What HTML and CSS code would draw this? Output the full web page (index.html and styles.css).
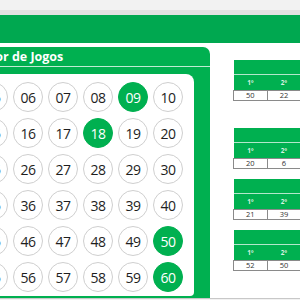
FILE: index.html
```
<!DOCTYPE html>
<html lang="pt">

<head>
    <meta charset="UTF-8">
    <title>Gerador de Jogos</title>
    <link rel="stylesheet" href="styles.css">
</head>

<body>
    <div class="topo"></div>
    <header class="barra"></header>

    <main class="conteudo">
        <section class="painel">
            <h2 class="titulo">Gerador de Jogos</h2>
            <div class="quadro">
                <div class="numeros">
                    <span class="bola">01</span><span class="bola">02</span><span class="bola">03</span><span class="bola">04</span><span class="bola">05</span>
                    <span class="bola">06</span><span class="bola">07</span><span class="bola">08</span><span class="bola sorteada">09</span><span class="bola">10</span>
                    <span class="bola">11</span><span class="bola">12</span><span class="bola">13</span><span class="bola">14</span><span class="bola">15</span>
                    <span class="bola">16</span><span class="bola">17</span><span class="bola sorteada">18</span><span class="bola">19</span><span class="bola">20</span>
                    <span class="bola">21</span><span class="bola">22</span><span class="bola">23</span><span class="bola">24</span><span class="bola">25</span>
                    <span class="bola">26</span><span class="bola">27</span><span class="bola">28</span><span class="bola">29</span><span class="bola">30</span>
                    <span class="bola">31</span><span class="bola">32</span><span class="bola">33</span><span class="bola">34</span><span class="bola">35</span>
                    <span class="bola">36</span><span class="bola">37</span><span class="bola">38</span><span class="bola">39</span><span class="bola">40</span>
                    <span class="bola">41</span><span class="bola">42</span><span class="bola">43</span><span class="bola">44</span><span class="bola">45</span>
                    <span class="bola">46</span><span class="bola">47</span><span class="bola">48</span><span class="bola">49</span><span class="bola sorteada">50</span>
                    <span class="bola">51</span><span class="bola">52</span><span class="bola">53</span><span class="bola">54</span><span class="bola">55</span>
                    <span class="bola">56</span><span class="bola">57</span><span class="bola">58</span><span class="bola">59</span><span class="bola sorteada">60</span>
                </div>
            </div>
        </section>

        <aside class="tabelas">
            <table class="tabela primeira">
                <tr class="cabeca"><td colspan="3"></td></tr>
                <tr class="ordem"><td>1º</td><td>2º</td><td>3º</td></tr>
                <tr class="dados"><td>50</td><td>22</td><td>9</td></tr>
            </table>
            <table class="tabela">
                <tr class="cabeca"><td colspan="3"></td></tr>
                <tr class="ordem"><td>1º</td><td>2º</td><td>3º</td></tr>
                <tr class="dados"><td>20</td><td>6</td><td>18</td></tr>
            </table>
            <table class="tabela">
                <tr class="cabeca"><td colspan="3"></td></tr>
                <tr class="ordem"><td>1º</td><td>2º</td><td>3º</td></tr>
                <tr class="dados"><td>21</td><td>39</td><td>60</td></tr>
            </table>
            <table class="tabela">
                <tr class="cabeca"><td colspan="3"></td></tr>
                <tr class="ordem"><td>1º</td><td>2º</td><td>3º</td></tr>
                <tr class="dados"><td>52</td><td>50</td><td>9</td></tr>
            </table>
        </aside>
    </main>

    <div class="rodape"></div>
</body>

</html>
```

FILE: styles.css
```
body {
    margin: 0;
    width: 300px;
    height: 300px;
    overflow: hidden;
    background: white;
    font-family: "Open Sans", "Liberation Sans", sans-serif;
}

.topo {
    height: 10px;
    background: #f2f2f2;
    border-bottom: 5px solid #e2e2e2;
}

.barra {
    height: 28px;
    background: #00a850;
}

.conteudo {
    display: flex;
    align-items: flex-start;
    margin-top: 4px;
    height: 251px;
}

/* painel com as bolas */
.painel {
    flex: none;
    width: 399px;
    margin-left: -189px;
    padding: 0 16px 2px 16px;
    box-sizing: border-box;
    background: #00b050;
    border-top-right-radius: 7px;
}

.titulo {
    margin: 0 -16px;
    height: 19px;
    line-height: 20px;
    font-size: 12.5px;
    font-weight: bold;
    color: white;
    text-align: center;
    border-bottom: 1px solid rgba(255, 255, 255, .75);
}

.quadro {
    margin-top: 7px;
    padding: 8px 11px 4px 11px;
    background: white;
    border-top-right-radius: 8px;
    border-bottom-right-radius: 4px;
}

.numeros {
    display: grid;
    grid-template-columns: repeat(10, 30px);
    column-gap: 5px;
    row-gap: 6px;
}

.bola {
    width: 30px;
    height: 30px;
    box-sizing: border-box;
    border: 1px solid #cfcfcf;
    border-radius: 50%;
    display: flex;
    align-items: center;
    justify-content: center;
    font-size: 14px;
    letter-spacing: -0.6px;
    color: #1e1e1e;
}

.sorteada {
    background: #00b050;
    border-color: #00b050;
    color: white;
}

/* tabelas da direita */
.tabelas {
    flex: none;
    display: flex;
    flex-direction: column;
    gap: 10px;
    margin-left: 23px;
    padding-top: 13px;
}

.tabela {
    border-collapse: collapse;
    table-layout: fixed;
    width: 102px;
}

.tabela.primeira {
    margin-bottom: 17px;
}

.tabela td {
    width: 34px;
    padding: 0;
    text-align: center;
}

.cabeca td {
    height: 14px;
    background: #00b050;
    border-bottom: 1px solid rgba(255, 255, 255, .7);
}

.ordem td {
    height: 15px;
    background: #00b050;
    color: rgba(255, 255, 255, .85);
    font-size: 6.5px;
    font-weight: bold;
}

.dados td {
    height: 9px;
    border: 1px solid #8a8a8a;
    font-size: 7.5px;
    line-height: 9px;
    color: #333;
}

.rodape {
    height: 2px;
    border-top: 1px solid #c8c8c8;
    background: #f2f2f2;
}
```
